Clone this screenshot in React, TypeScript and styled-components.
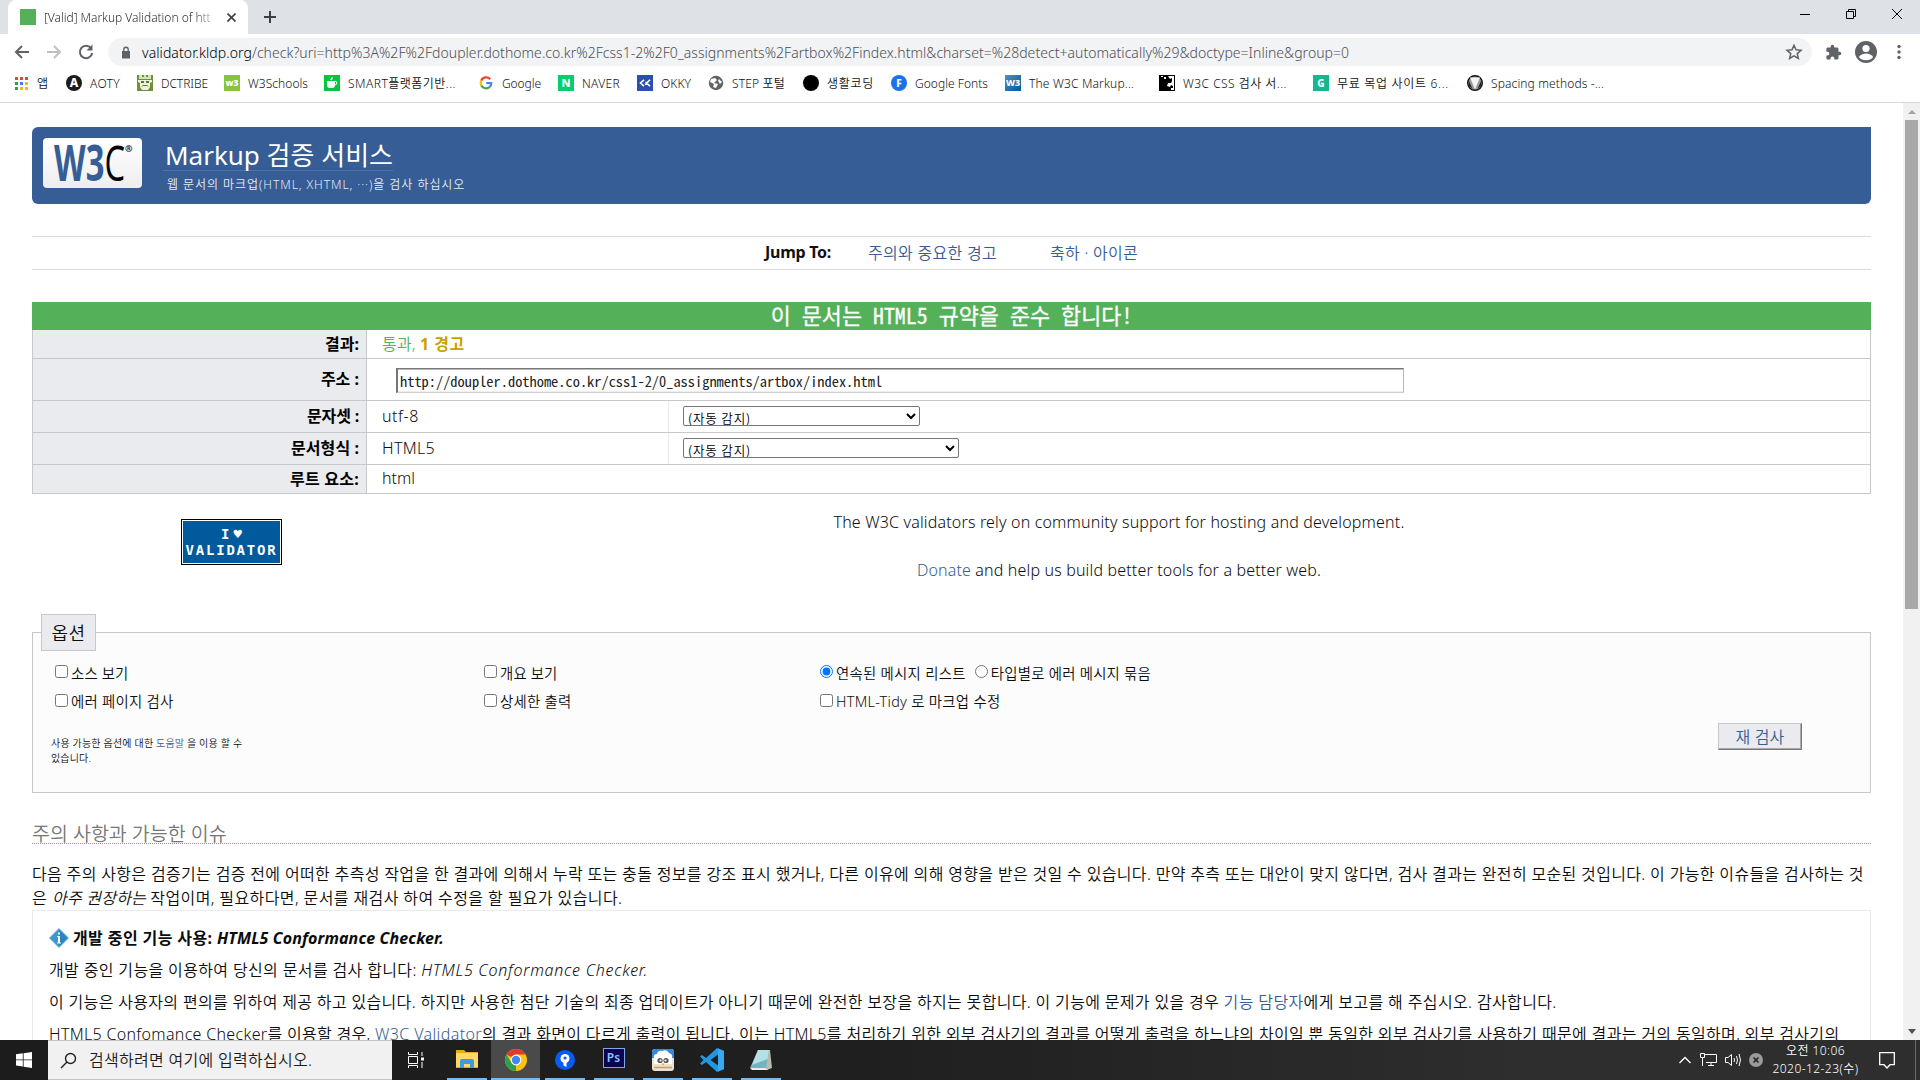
import React from "react";
import styled, { createGlobalStyle, css } from "styled-components";

const SANS = '"Noto Sans", "Noto Sans CJK KR", sans-serif';
const MONO = '"Noto Sans Mono CJK KR", "DejaVu Sans Mono", monospace';
const BLUE = "#365d95";

const Global = createGlobalStyle`
  * { box-sizing: border-box; }
  body { margin: 0; background: #fff; overflow: hidden; }
`;

type TProps = {
  ls?: number;
  w?: number;
  c?: string;
  i?: boolean;
  mono?: boolean;
  children: React.ReactNode;
};

const Txt = styled.span<{ $ls?: number; $w?: number; $c?: string; $i?: boolean; $mono?: boolean }>`
  ${(p) => p.$w && css`font-weight: ${p.$w};`}
  ${(p) => p.$c && css`color: ${p.$c};`}
  ${(p) => p.$i && css`font-style: italic;`}
  ${(p) => p.$mono && css`font-family: ${MONO};`}
  letter-spacing: ${(p) => p.$ls ?? 0}px;
  white-space: pre;
`;
const T = ({ ls, w, c, i, mono, children }: TProps) => (
  <Txt $ls={ls} $w={w} $c={c} $i={i} $mono={mono}>{children}</Txt>
);

const Screen = styled.div`
  width: 1920px; height: 1080px; display: flex; flex-direction: column; overflow: hidden;
  font-family: ${SANS}; font-weight: 350; font-size: 16px; color: #0c0c0c; background: #fff;
`;

/* ---------- browser chrome ---------- */
const TabStrip = styled.div`height: 34px; background: #dee1e6; display: flex; padding-left: 8px; flex: none;`;
const Tab = styled.div`
  width: 240px; height: 34px; background: #fff; border-radius: 8px 8px 0 0; display: flex; align-items: center;
  padding: 0 10px 0 12px; font-size: 12px; color: #2b2e32;
`;
const Favicon = styled.div`width: 16px; height: 16px; background: #55b05a; margin-right: 8px; flex: none;`;
const TabTitle = styled.div`
  width: 175px; overflow: hidden; white-space: nowrap; flex: none;
  mask-image: linear-gradient(90deg, #000 150px, transparent 177px);
`;
const TabClose = styled.div`margin-left: 8px; display: flex;`;
const NewTab = styled.div`margin-left: 15px; display: flex; align-items: center;`;
const WinButtons = styled.div`margin-left: auto; display: flex; height: 28px; align-items: center; gap: 34px; padding-right: 17px;`;
const Toolbar = styled.div`height: 34px; display: flex; align-items: center; padding: 2px 0 0 13px; flex: none;`;
const NavIcon = styled.div`width: 32px; display: flex; align-items: center;`;
const Omnibox = styled.div`
  width: 1704px; height: 28px; margin-left: -1px; border-radius: 14px; background: #f1f3f4; display: flex; align-items: center;
  padding: 0 9px 0 13px; font-size: 14px; color: #4c5054; white-space: nowrap;
`;
const Lock = styled.div`width: 21px; display: flex;`;
const StarSlot = styled.div`margin-left: auto; display: flex;`;
const ToolIcons = styled.div`display: flex; align-items: center; margin-left: 13px;`;
const Bookmarks = styled.div`
  height: 35px; display: flex; align-items: center; padding: 0 0 4px 13px; border-bottom: 1px solid #d5d7da; flex: none;
  font-size: 12px; color: #111; white-space: nowrap;
`;
const Bookmark = styled.div<{ $w: number }>`width: ${(p) => p.$w}px; flex: none; display: flex; align-items: center; gap: 8px; height: 30px;`;
const Ico = styled.span<{ $bg?: string; $round?: boolean; $z?: number }>`
  width: 16px; height: 16px; flex: none; display: flex; align-items: center; justify-content: center;
  background: ${(p) => p.$bg ?? "transparent"}; border-radius: ${(p) => (p.$round ? "50%" : "0")};
  color: #fff; font-size: ${(p) => p.$z ?? 11}px; font-weight: 800; line-height: 16px;
`;

/* ---------- page ---------- */
const Viewport = styled.div`height: 937px; flex: none; display: flex;`;
const Page = styled.div`width: 1903px; height: 937px; overflow: hidden; padding: 24px 32px 0 32px;`;
const ScrollTrack = styled.div`
  width: 17px; background: #f1f1f1; display: flex; flex-direction: column; align-items: center; justify-content: space-between;
`;
const ScrollArrow = styled.div<{ $down?: boolean }>`
  height: 17px; display: flex; align-items: center;
  &::before { content: ""; border: 4px solid transparent; border-top-width: 0; border-bottom: 4px solid #a3a3a3;
    ${(p) => p.$down && css`border-bottom: 0; border-top: 5px solid #505050;`} }
`;
const ScrollThumb = styled.div`width: 13px; height: 489px; background: #a8a8a8; margin-bottom: auto;`;

const Banner = styled.div`height: 77px; background: ${BLUE}; border-radius: 6px 0 6px 6px; display: flex; padding: 11px; color: #fff;`;
const LogoBox = styled.div`
  width: 99px; height: 50px; border-radius: 4px; background: linear-gradient(#fff, #eee); flex: none; margin-right: 21px;
`;
const Heading = styled.div`display: flex; flex-direction: column; align-items: flex-start;`;
const Title = styled.h1`
  margin: 0; padding: 0 0 0 2px; height: 33px; line-height: 34px; font-size: 26px; font-weight: 400; border-bottom: 1px solid #4f73a6;
`;
const Tagline = styled.p`margin: 5px 0 0 4px; font-size: 12px; line-height: 18px; color: #e6ecf5;`;

const JumpBar = styled.div`
  margin-top: 32px; height: 34px; border: solid #dcdcdc; border-width: 1px 0; display: flex; align-items: center;
  padding: 0 0 2px 733px; color: ${BLUE};
  & > :nth-child(1) { width: 103px; color: #111; }
  & > :nth-child(2) { width: 182px; }
`;
const Verdict = styled.h2`
  margin: 32px 0 0; height: 28px; line-height: 26px; background: #55b05a; color: #fff; font-weight: 500; font-size: 21.8px;
  text-align: center; -webkit-text-stroke: 0.3px #fff;
`;
const Table = styled.div`border: solid #c8c8c8; border-width: 0 1px;`;
const Row = styled.div<{ $h: number }>`height: ${(p) => p.$h}px; display: flex; border-bottom: 1px solid #c8c8c8;`;
const Label = styled.div<{ $pb?: number }>`
  width: 334px; background: #eaebee; border-right: 1px solid #c8c8c8; display: flex; align-items: center; justify-content: flex-end;
  padding: 0 7px ${(p) => p.$pb ?? 2}px 0; font-weight: 700; color: #000;
`;
const Value = styled.div<{ $w?: number; $pl?: number }>`
  display: flex; align-items: center; padding-left: ${(p) => p.$pl ?? 15}px;
  ${(p) => p.$w && css`width: ${p.$w}px; border-right: 1px solid #eaebee;`}
  & > span { padding-bottom: 2px; }
`;
const UrlInput = styled.input`
  width: 1008px; height: 25px; margin-top: 2px; border: 1px solid; border-color: #767676 #b8b8b8 #cfcfcf #767676; border-width: 1px 1px 1px 2px;
  padding: 0 2px; font: 14.4px ${MONO}; color: #222; background: #fff; box-shadow: inset 0 1px 0 #bbb, inset 0 -1px 0 #eee;
`;
/* The CJK family comes first so that the option's line box fits inside the 18px interior. */
const Select = styled.select<{ $w: number }>`
  width: ${(p) => p.$w}px; height: 20px; margin-bottom: 1px; font-family: "Noto Sans CJK KR", sans-serif; font-size: 12.6px; font-weight: 350;
  letter-spacing: 0.8px; color: #000; background: #fff; border: 1px solid #767676; border-radius: 2px; padding: 0;
`;
const Support = styled.div`height: 138px; display: flex; padding-top: 16px;`;
const Badge = styled.div`
  margin: 9px 0 0 149px; width: 101px; height: 46px; background: #005a9c; border: 1px solid #000; box-shadow: inset 0 0 0 1px #fff;
  color: #fff; display: flex; flex-direction: column; align-items: center; padding-top: 6px;
  font: 700 14px/16px "DejaVu Sans Mono", monospace;
`;
const Heart = styled.span`display: flex; gap: 4px; align-items: center;`;
const Pitch = styled.div`
  flex: 1; padding-left: 84px; text-align: center; line-height: 24px;
  p { margin: 0 0 24px 1px; } a { color: ${BLUE}; }
`;
const Options = styled.div`height: 161px; border: 1px solid #c8c8c8; background: #fcfcfc; display: flex; flex-direction: column;`;
const Legend = styled.div`
  margin: -19px 0 0 8px; width: 55px; height: 37px; background: #eaebee; border: 1px solid #c8c8c8; font-size: 18px;
  display: flex; align-items: center; justify-content: center; padding-bottom: 2px;
`;
const Choices = styled.div`
  margin: 8px 0 0 22px; display: grid; grid-template-columns: 429px 336px 1fr; grid-auto-rows: 28.5px; font-size: 14.4px;
`;
const Choice = styled.label<{ $ml?: number }>`
  display: inline-flex; align-items: center; margin-left: ${(p) => p.$ml ?? 0}px;
  input { width: 13px; height: 13px; margin: 0 3px 3px 0; }
  span { padding-bottom: 2px; }
`;
const ChoicePair = styled.div`display: flex; align-items: center;`;
const OptionFoot = styled.div`display: flex; justify-content: space-between; align-items: flex-start; padding: 7px 68px 0 18px;`;
const Fine = styled.div`font-size: 10px; line-height: 15px; padding-top: 13px; display: flex; flex-direction: column; a { color: ${BLUE}; }`;
const Recheck = styled.button`
  width: 84px; height: 27px; padding: 0 0 2px; background: #eaebee; border: 1px solid #c8c8c8; border-right-color: #777; border-bottom-color: #777;
  box-shadow: inset -1px -1px 0 #aaa; font: 350 16px ${SANS}; color: ${BLUE};
`;
const SectionTitle = styled.h3`
  margin: 26px 0 18px; height: 25px; line-height: 30px; font-size: 19.5px; font-weight: 350; color: #777; border-bottom: 1px dotted #9a9a6e;
`;
const Para = styled.div`line-height: 24px; white-space: nowrap;`;
const Issue = styled.div`height: 300px; border: 1px solid #eaebee; padding: 10px 0 0 16px; white-space: nowrap;`;
const IssueLine = styled.div`height: 32px; line-height: 32px; a { color: ${BLUE}; }`;
const IssueTitle = styled(IssueLine)`height: 33px; font-weight: 700; display: flex; align-items: center; svg { margin-right: 4px; }`;

/* ---------- taskbar ---------- */
const Taskbar = styled.div`
  height: 40px; flex: none; display: flex; align-items: stretch; color: #fff;
  background: linear-gradient(90deg, #1c1c1c, #1f1f1f 45%, #2e2e2e 80%);
`;
const Start = styled.div`width: 48px; display: flex; align-items: center; justify-content: center;`;
const Search = styled.div`
  width: 344px; background: #f1f1f1; border: solid #c4c4c4; border-width: 1px 0; color: #1b1b1b; display: flex; align-items: center;
  padding-left: 12px; gap: 12px;
  span { padding-bottom: 2px; }
`;
const TaskView = styled.div`width: 50px; display: flex; align-items: center; justify-content: center; padding-right: 3px;`;
const TaskApp = styled.div<{ $active?: boolean }>`
  width: 49px; display: flex; flex-direction: column; align-items: center; justify-content: space-between; padding-top: 8px;
  ${(p) => p.$active && css`background: #4a4a4a;`}
  &::after { content: ""; width: ${(p) => (p.$active ? 49 : 40)}px; height: 2px; background: #76b9ed; }
`;
const Tray = styled.div`margin-left: auto; display: flex; align-items: center;`;
const Clock = styled.div`
  width: 101px; display: flex; flex-direction: column; align-items: center; font-size: 12px; line-height: 18px; margin-right: 13px; height: 37px;
`;
const PeekLine = styled.div`width: 1px; height: 40px; background: #6a6a6a; margin: 0 4px 0 20px;`;

const FolderIcon = () => (
  <svg width="22" height="22" viewBox="0 0 22 22">
    <path d="M0 2h8l2 2h12v16H0z" fill="#e8a91c" />
    <path d="M0 5h22v14H0z" fill="#ffd866" />
    <path d="M4 20v-7q0-2 2-2h10q2 0 2 2v7h-4v-4H8v4z" fill="#3d9be0" />
  </svg>
);
const ChromeIcon = () => (
  <svg width="24" height="24" viewBox="0 0 24 24">
    <circle cx="12" cy="12" r="11" fill="#fbc116" />
    <path d="M12 12L2.500 6.500A11 11 0 0 1 21.500 6.500H12z" fill="#e0392d" />
    <path d="M2.500 6.500L7.600 15 12 16.500 12 23A11 11 0 0 1 2.500 6.500z" fill="#2da04b" />
    <circle cx="12" cy="12" r="5.400" fill="#fff" />
    <circle cx="12" cy="12" r="4.200" fill="#4285f4" />
  </svg>
);
const PinIcon = () => (
  <svg width="22" height="24" viewBox="0 -1 22 24">
    <circle cx="11" cy="11" r="10" fill="#0a5cf0" />
    <circle cx="11" cy="9.500" r="4.500" fill="#fff" />
    <path d="M9.500 12h3v6l-3-1.500z" fill="#fff" />
    <circle cx="11" cy="9" r="1.600" fill="#0a5cf0" />
  </svg>
);
const PsBox = styled.div`width: 22px; height: 20px; border: 1px solid #7fa8ec; background: #0b0550; color: #8fc0ff; font: 600 12px/17px ${SANS}; text-align: center;`;
const BirdIcon = () => (
  <svg width="24" height="24" viewBox="0 0 24 24">
    <rect x="1" y="1" width="22" height="22" rx="3" fill="#e9e4d2" />
    <path d="M1 10V4q0-3 3-3h16q3 0 3 3v6z" fill="#3789d8" />
    <path d="M3 16V10q-1-4 3-4 1-4 5-3 5-2 7 2 4 1 3 5v6z" fill="#fff" />
    <circle cx="9" cy="12.500" r="2.600" fill="#555" />
    <circle cx="15" cy="12.500" r="2.600" fill="#555" />
    <circle cx="9.500" cy="12.500" r="1.100" fill="#fff" />
    <circle cx="14.500" cy="12.500" r="1.100" fill="#fff" />
    <path d="M10.500 15.500h3L12 17.500z" fill="#e8a91c" />
    <path d="M3 19.500h18" stroke="#c9a24a" strokeWidth="1.500" />
  </svg>
);
const CodeIcon = () => (
  <svg width="24" height="24" viewBox="0 0 24 24">
    <path d="M17 0l7 3v18l-7 3L6 14l-4 3-2-1.500L3.500 12 0 8.500 2 7l4 3z" fill="#2196e3" />
    <path d="M18 6.500L10.500 12l7.500 5.500z" fill="#1f1f1f" />
    <path d="M18 0.500l6 2.500v18l-6 2.500z" fill="#38a9f2" />
  </svg>
);
const NoteIcon = () => (
  <svg width="24" height="24" viewBox="0 0 24 24">
    <path d="M9 2h12l2 18-5 2z" fill="#b8bcae" />
    <path d="M9 2h11l-3 18H1z" fill="#6fb6c0" />
    <path d="M9 2h11l-1.500 9L3 17z" fill="#b5e0e6" />
    <path d="M1 20h16l2 2H3z" fill="#e8efe8" />
  </svg>
);

const APP_DOTS = ["#e8453c", "#e8453c", "#e8453c", "#2f9e52", "#3b7ded", "#f5b912", "#2f9e52", "#f5b912", "#f5b912"];
const AppsIcon = () => (
  <svg width="13" height="13" viewBox="0 0 13 13">
    {APP_DOTS.map((c, i) => (
      <rect key={i} x={(i % 3) * 5} y={Math.floor(i / 3) * 5} width="3" height="3" fill={c} />
    ))}
  </svg>
);
const TribeIcon = () => (
  <svg width="16" height="16" viewBox="0 0 16 16">
    <path d="M0 0h16v16H0z" fill="#6f8f3e" />
    <path d="M2 0h3v2h2V0h2v2h2V0h3v4H2z" fill="#d9e3bb" />
    <path d="M1 5h14v2l-2 1v4l-2 3H5l-2-3V8L1 7z" fill="#eef2dd" />
    <path d="M4 6h3v2H4zM9 6h3v2H9zM4 12l2-2h4l2 2-2-1H6z" fill="#5b7a2c" />
  </svg>
);
const CupIcon = () => (
  <svg width="12" height="12" viewBox="0 0 12 12">
    <path d="M1 4h8v4a3 3 0 0 1-3 3H4a3 3 0 0 1-3-3z" fill="#fff" />
    <circle cx="9" cy="6" r="1.800" fill="none" stroke="#fff" />
    <path d="M4 3l2-3 1 1-1 2z" fill="#fff" />
  </svg>
);
const OkkyIcon = () => (
  <svg width="12" height="8" viewBox="0 0 12 8" fill="none" stroke="#fff" strokeWidth="1.600">
    <path d="M5 .8L1.500 4 5 7.200M11 .8L6 5.500M11 7.200L6.500 3" />
  </svg>
);
const GoogleIcon = () => (
  <svg width="16" height="16" viewBox="0 0 16 16" fill="none" strokeWidth="2.200">
    <path d="M12.200 4.200A5.300 5.300 0 0 0 3.300 5.600" stroke="#ea4335" />
    <path d="M3.300 5.600a5.300 5.300 0 0 0 0 4.800" stroke="#fbbc05" />
    <path d="M3.300 10.400a5.300 5.300 0 0 0 8.300 1.600" stroke="#34a853" />
    <path d="M11.600 12A5.300 5.300 0 0 0 13.300 8H8.200" stroke="#4285f4" />
  </svg>
);
const GlobeIcon = () => (
  <svg width="16" height="16" viewBox="0 0 16 16">
    <circle cx="8" cy="8" r="7.200" fill="#5f6368" />
    <path d="M3 4l4-1 2 2-3 3 4 1-2 4-3-1 1-3-4-2zM11 4l3 3-2 2-2-3z" fill="#fff" />
  </svg>
);
const CssCheckIcon = () => (
  <svg width="16" height="16" viewBox="0 0 16 16">
    <path d="M0 0h16v16H0z" fill="#000" />
    <path d="M9 1h6v14h-3v-2h2v-2l-2-1-1 2-3-1 1-3h3l1-2V3l-2 1z" fill="#fff" />
    <path d="M5 2h2v2H5zM2 1h2v1H2z" fill="#fff" />
  </svg>
);
const VeeIcon = () => (
  <svg width="16" height="16" viewBox="0 0 16 16">
    <circle cx="8" cy="8" r="7.300" fill="#999" stroke="#111" strokeWidth="1.400" />
    <path d="M3 2.500L8 14.500 13 2.500z" fill="#f4f4f4" />
    <path d="M1.500 5l4 9L2 11zM14.500 5l-4 9 3.500-3z" fill="#222" />
  </svg>
);

const BOOKMARKS: [React.ReactNode, string, number, number][] = [
  [<AppsIcon />, "앱", 53, 0],
  [<Ico $bg="#1b1b1b" $round $z={12}>A</Ico>, "AOTY", 71, 0.32],
  [<TribeIcon />, "DCTRIBE", 87, -0.08],
  [<Ico $bg="#86c440" $z={9}>w3</Ico>, "W3Schools", 100, 0.04],
  [<Ico $bg="#00c73c"><CupIcon /></Ico>, "SMART플랫폼기반...", 154, 0.47],
  [<GoogleIcon />, "Google", 80, -0.08],
  [<Ico $bg="#05cf6c">N</Ico>, "NAVER", 79, 0.32],
  [<Ico $bg="#2b4fae"><OkkyIcon /></Ico>, "OKKY", 71, 0.05],
  [<GlobeIcon />, "STEP 포털", 95, 0.16],
  [<Ico $bg="#000" $round />, "생활코딩", 88, 0.7],
  [<Ico $bg="#1a73e8" $round $z={10}>F</Ico>, "Google Fonts", 114, 0.03],
  [<Ico $bg="linear-gradient(135deg,#4d8fc4,#005a9c)" $z={9}>W3</Ico>, "The W3C Markup...", 154, 0.17],
  [<CssCheckIcon />, "W3C CSS 검사 서...", 154, 0.47],
  [<Ico $bg="#12b98f" $z={10}>G</Ico>, "무료 목업 사이트 6...", 154, 0.69],
  [<VeeIcon />, "Spacing methods -...", 150, 0.13],
];

type CheckProps = { children: React.ReactNode; ls: number; radio?: boolean; on?: boolean; ml?: number };
const Check = ({ children, ls, radio, on, ml }: CheckProps) => (
  <Choice $ml={ml}>
    <input type={radio ? "radio" : "checkbox"} defaultChecked={on} />
    <T ls={ls}>{children}</T>
  </Choice>
);

export default function App() {
  return (
    <Screen>
      <Global />
      <TabStrip>
        <Tab>
          <Favicon />
          <TabTitle><T ls={-0.03}>[Valid] Markup Validation of htt</T></TabTitle>
          <TabClose><svg width="9" height="9" viewBox="0 0 9 9" stroke="#3c4043" strokeWidth="1.600"><path d="M.5.5l8 8M8.500.5l-8 8" /></svg></TabClose>
        </Tab>
        <NewTab><svg width="14" height="14" viewBox="0 0 14 14" stroke="#3c4043" strokeWidth="2"><path d="M7 1v12M1 7h12" /></svg></NewTab>
        <WinButtons>
          <svg width="12" height="12" stroke="#000"><path d="M1 6.500h10" /></svg>
          <svg width="12" height="12" stroke="#000" fill="none"><path d="M1.500 3.500h7v7h-7zM3.500 3.500v-2h7v7h-2" /></svg>
          <svg width="12" height="12" stroke="#000"><path d="M1 1l10 10M11 1L1 11" /></svg>
        </WinButtons>
      </TabStrip>
      <Toolbar>
        <NavIcon><svg width="18" height="18" viewBox="0 0 18 18" fill="none" stroke="#5f6368" strokeWidth="2"><path d="M16 9H3M9 3L3 9l6 6" /></svg></NavIcon>
        <NavIcon><svg width="18" height="18" viewBox="0 0 18 18" fill="none" stroke="#bdbfc2" strokeWidth="2"><path d="M2 9h13M9 3l6 6-6 6" /></svg></NavIcon>
        <NavIcon><svg width="18" height="18" viewBox="0 0 18 18" fill="none" stroke="#5f6368" strokeWidth="2"><path d="M14 5.200A6.200 6.200 0 1 0 15.200 10" /><path d="M15.500 1.500v6h-6z" fill="#5f6368" stroke="none" /></svg></NavIcon>
        <Omnibox>
          <Lock><svg width="10" height="13" viewBox="0 0 10 13"><path d="M1 5h8v7.500H1z" fill="#5f6368" /><path d="M2.800 5V3.500a2.200 2.200 0 0 1 4.400 0V5" fill="none" stroke="#5f6368" strokeWidth="1.400" /></svg></Lock>
          <T ls={0.078} c="#000">validator.kldp.org</T>
          <T ls={0.034}>/check?uri=http%3A%2F%2Fdoupler.dothome.co.kr%2Fcss1-2%2F0_assignments%2Fartbox%2Findex.html&amp;charset=%28detect+automatically%29&amp;doctype=Inline&amp;group=0</T>
          <StarSlot><svg width="18" height="18" viewBox="0 0 24 24" fill="none" stroke="#5f6368" strokeWidth="2"><path d="M12 3l2.700 6.100 6.600.6-5 4.400 1.500 6.500-5.800-3.400-5.800 3.400 1.500-6.500-5-4.400 6.600-.6z" /></svg></StarSlot>
        </Omnibox>
        <ToolIcons>
          <svg width="17" height="17" viewBox="0 0 24 24" fill="#5f6368"><path d="M20.500 11H19V7c0-1.100-.9-2-2-2h-4V3.500a2.500 2.500 0 0 0-5 0V5H4c-1.100 0-2 .9-2 2v3.800h1.500a2.700 2.700 0 0 1 0 5.400H2V20c0 1.100.9 2 2 2h3.800v-1.500a2.700 2.700 0 0 1 5.400 0V22H17c1.100 0 2-.9 2-2v-4h1.500a2.500 2.500 0 0 0 0-5z" /></svg>
          <svg width="48" height="24" viewBox="-11 0 48 24"><circle cx="13" cy="12" r="11" fill="#5f6368" /><circle cx="13" cy="8.500" r="3.600" fill="#fff" /><path d="M5.800 17q2.600-3.600 7.200-3.600T20.200 17q-2.600 3.300-7.200 3.300T5.800 17z" fill="#fff" /></svg>
          <svg width="20" height="16" viewBox="-4 0 20 16" fill="#5f6368"><circle cx="5" cy="2.500" r="1.700" /><circle cx="5" cy="8" r="1.700" /><circle cx="5" cy="13.500" r="1.700" /></svg>
        </ToolIcons>
      </Toolbar>
      <Bookmarks>
        {BOOKMARKS.map(([icon, label, w, ls]) => (
          <Bookmark key={label} $w={w}><Ico>{icon}</Ico><T ls={ls}>{label}</T></Bookmark>
        ))}
      </Bookmarks>
      <Viewport>
        <Page>
          <Banner>
            <LogoBox>
              <svg width="99" height="50" fontFamily="Open Sans, sans-serif">
                <text x="11" y="43" fontSize="50" fontWeight="700" fill={BLUE} textLength="71" lengthAdjust="spacingAndGlyphs">W3<tspan fill="#000" fontWeight="500">C</tspan></text>
                <text x="82" y="14" fontSize="9" fontWeight="700" fill="#000">®</text>
              </svg>
            </LogoBox>
            <Heading>
              <Title><T>Markup 검증 서비스</T></Title>
              <Tagline><T ls={0.95}>웹 문서의 마크업(HTML, XHTML, ···)을 검사 하십시오</T></Tagline>
            </Heading>
          </Banner>
          <JumpBar>
            <div><T ls={-0.27} w={700}>Jump To:</T></div>
            <div><T ls={0.29}>주의와 중요한 경고</T></div>
            <div><T ls={0.27}>축하 · 아이콘</T></div>
          </JumpBar>
          <Verdict><T ls={0.05} mono>이 문서는 HTML5 규약을 준수 합니다!</T></Verdict>
          <Table>
            <Row $h={29}><Label><T>결과:</T></Label><Value><T ls={0.2} c="#55b05a">통과, </T><T ls={0.5} w={700} c="#cba100">1 경고</T></Value></Row>
            <Row $h={42}><Label $pb={4}><T>주소 :</T></Label><Value $pl={29}><UrlInput defaultValue="http://doupler.dothome.co.kr/css1-2/0_assignments/artbox/index.html" /></Value></Row>
            <Row $h={32}><Label $pb={3}><T ls={-0.17}>문자셋 :</T></Label><Value $w={302}><T ls={0.55}>utf-8</T></Value><Value $pl={14}><Select $w={237}><option>(자동 감지)</option></Select></Value></Row>
            <Row $h={32}><Label $pb={3}><T ls={0.07}>문서형식 :</T></Label><Value $w={302}><T ls={0.32}>HTML5</T></Value><Value $pl={14}><Select $w={276}><option>(자동 감지)</option></Select></Value></Row>
            <Row $h={29}><Label><T ls={0.24}>루트 요소:</T></Label><Value><T>html</T></Value></Row>
          </Table>
          <Support>
            <Badge><Heart><span>I</span><span>♥</span></Heart><T ls={1.8}>VALIDATOR</T></Badge>
            <Pitch>
              <p><T ls={0.171}>The W3C validators rely on community support for hosting and development.</T></p>
              <p><a><T ls={0.13}>Donate</T></a><T ls={0.164}> and help us build better tools for a better web.</T></p>
            </Pitch>
          </Support>
          <Options>
            <Legend><T ls={0.44}>옵션</T></Legend>
            <Choices>
              <Check ls={0.16}>소스 보기</Check>
              <Check ls={0.16}>개요 보기</Check>
              <ChoicePair><Check ls={0.28} radio on>연속된 메시지 리스트</Check><Check ls={0.25} radio ml={9}>타입별로 에러 메시지 묶음</Check></ChoicePair>
              <Check ls={0.25}>에러 페이지 검사</Check>
              <Check ls={0.25}>상세한 출력</Check>
              <Check ls={0.3}>HTML-Tidy 로 마크업 수정</Check>
            </Choices>
            <OptionFoot>
              <Fine>
                <div><T ls={0.19}>사용 가능한 옵션에 대한 </T><a><T ls={0.13}>도움말</T></a><T ls={0.22}> 을 이용 할 수</T></div>
                <div><T ls={0.15}>있습니다.</T></div>
              </Fine>
              <Recheck><T ls={0.17}>재 검사</T></Recheck>
            </OptionFoot>
          </Options>
          <SectionTitle><T>주의 사항과 가능한 이슈</T></SectionTitle>
          <Para><T ls={0.34}>다음 주의 사항은 검증기는 검증 전에 어떠한 추측성 작업을 한 결과에 의해서 누락 또는 충돌 정보를 강조 표시 했거나, 다른 이유에 의해 영향을 받은 것일 수 있습니다. 만약 추측 또는 대안이 맞지 않다면, 검사 결과는 완전히 모순된 것입니다. 이 가능한 이슈들을 검사하는 것</T></Para>
          <Para><T ls={0.6}>은 </T><T ls={0.2} i>아주 권장하는 </T><T ls={0.395}>작업이며, 필요하다면, 문서를 재검사 하여 수정을 할 필요가 있습니다.</T></Para>
          <Issue>
            <IssueTitle>
              <svg width="20" height="20" viewBox="0 0 20 20"><path d="M10 .5L19.500 10 10 19.500.5 10z" fill="#2a86c0" stroke="#7db9de" /><path d="M10 1v18L1 10z" fill="#4aa3d8" opacity=".6" /><path d="M9 4.500h2v2H9zM8.200 8H11v6.500h1v1H8.200v-1H9V9h-.8z" fill="#fff" /></svg>
              <T ls={0.39}>개발 중인 기능 사용: </T><T ls={0.12} i>HTML5 Conformance Checker.</T>
            </IssueTitle>
            <IssueLine><T ls={0.36}>개발 중인 기능을 이용하여 당신의 문서를 검사 합니다: </T><T ls={0.74} i>HTML5 Conformance Checker.</T></IssueLine>
            <IssueLine><T ls={0.334}>이 기능은 사용자의 편의를 위하여 제공 하고 있습니다. 하지만 사용한 첨단 기술의 최종 업데이트가 아니기 때문에 완전한 보장을 하지는 못합니다. 이 기능에 문제가 있을 경우 </T><a><T ls={0.37}>기능 담당자</T></a><T ls={0.37}>에게 보고를 해 주십시오. 감사합니다.</T></IssueLine>
            <IssueLine><T ls={0.313}>HTML5 Confomance Checker를 이용할 경우, </T><a><T ls={0.38}>W3C Validator</T></a><T ls={0.34}>의 결과 화면이 다르게 출력이 됩니다. 이는 HTML5를 처리하기 위한 외부 검사기의 결과를 어떻게 출력을 하느냐의 차이일 뿐 동일한 외부 검사기를 사용하기 때문에 결과는 거의 동일하며, 외부 검사기의</T></IssueLine>
          </Issue>
        </Page>
        <ScrollTrack><ScrollArrow /><ScrollThumb /><ScrollArrow $down /></ScrollTrack>
      </Viewport>
      <Taskbar>
        <Start><svg width="16" height="16" viewBox="0 0 16 16" fill="#fff"><path d="M0 2.200L6.800 1.300v6.200H0zM7.600 1.200L16 0v7.500H7.600zM0 8.300h6.800v6.200L0 13.600zM7.600 8.300H16V16l-8.400-1.200z" /></svg></Start>
        <Search>
          <svg width="17" height="17" viewBox="0 0 17 17" fill="none" stroke="#222" strokeWidth="1.400"><circle cx="10.500" cy="6.500" r="5" /><path d="M7 10L1 16" /></svg>
          <T ls={0.29}>검색하려면 여기에 입력하십시오.</T>
        </Search>
        <TaskView><svg width="17" height="16" viewBox="0 0 17 16" fill="none" stroke="#fff"><path d="M1.500 0v2.500h9V0M1.500 4.500h9v7h-9zM1.500 16v-2.500h9V16M15 0v4M15 10v6" /><path d="M14 5.500h3v3h-3z" fill="#fff" stroke="none" /></svg></TaskView>
        <TaskApp><FolderIcon /></TaskApp>
        <TaskApp $active><ChromeIcon /></TaskApp>
        <TaskApp><PinIcon /></TaskApp>
        <TaskApp><PsBox>Ps</PsBox></TaskApp>
        <TaskApp><BirdIcon /></TaskApp>
        <TaskApp><CodeIcon /></TaskApp>
        <TaskApp><NoteIcon /></TaskApp>
        <Tray>
          <svg width="12" height="8" viewBox="0 0 12 8" fill="none" stroke="#fff" strokeWidth="1.300"><path d="M.5 7L6 1.500 11.500 7" /></svg>
          <svg width="28" height="14" viewBox="-9 0 28 14" fill="none" stroke="#fff"><path d="M5 1.500h11.500v8H6M8 12.500h6M11 9.500v3M.5.500h4v4h-4zM2.500 4.500V13" /></svg>
          <svg width="24" height="14" viewBox="-6 0 24 14" fill="none" stroke="#fff"><path d="M.5 4.500h2.500l3.500-3v11l-3.500-3H.5zM9 5q1 2 0 4M11.500 3q2 4 0 8M14 1q3 6 0 12" /></svg>
          <svg width="22" height="14" viewBox="-6 0 22 14"><circle cx="7" cy="7" r="7" fill="#9b9b9b" /><path d="M4.500 4.500l5 5M9.500 4.500l-5 5" stroke="#222" strokeWidth="1.600" /></svg>
          <Clock><T ls={0.43}>오전 10:06</T><T ls={0.44}>2020-12-23(수)</T></Clock>
          <svg width="16" height="17" viewBox="0 0 16 17" fill="none" stroke="#fff" strokeWidth="1.300"><path d="M.7.7h14.600v12H11L8 16l-3-3.300H.7z" /></svg>
          <PeekLine />
        </Tray>
      </Taskbar>
    </Screen>
  );
}
